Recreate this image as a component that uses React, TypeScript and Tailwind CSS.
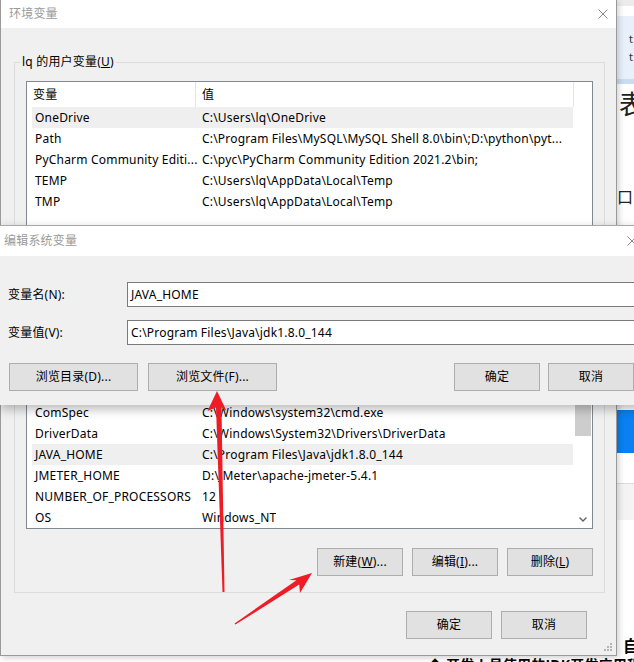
import React from "react";

type BtnProps = { children: React.ReactNode; className?: string };

const Btn = ({ children, className = "" }: BtnProps) => (
  <div
    className={`h-[28px] border border-[#adadad] bg-[#e1e1e1] flex items-center justify-center text-[12px] leading-[16px] text-black shrink-0 ${className}`}
  >
    {children}
  </div>
);

const Row = ({ name, value, sel = false }: { name: string; value: string; sel?: boolean }) => (
  <div className={`ml-[5px] w-[541px] h-[21px] flex items-center ${sel ? "bg-[#efefef]" : ""}`}>
    <div className="w-[163px] shrink-0 pl-[3px] whitespace-nowrap">{name}</div>
    <div className="pl-[7px] whitespace-nowrap overflow-hidden">{value}</div>
  </div>
);

const Header = () => (
  <div className="h-[25px] flex w-[547px]">
    <div className="w-[169px] pl-[6px] h-full flex items-center border-r border-[#e5e5e5]">变量</div>
    <div className="w-[378px] pl-[6px] h-full flex items-center border-r border-[#e5e5e5]">值</div>
  </div>
);

const CloseX = ({ className = "" }: { className?: string }) => (
  <svg width="10" height="10" viewBox="0 0 10 10" className={className}>
    <path d="M0.5 0.5 L9.5 9.5 M9.5 0.5 L0.5 9.5" stroke="#8a8a8a" strokeWidth="1" fill="none" />
  </svg>
);

export default function App() {
  return (
    <div className="relative w-[634px] h-[662px] overflow-hidden bg-white text-[12px] leading-[16px] tracking-[0.2px] text-black font-['Segoe_UI','Noto_Sans','Noto_Sans_CJK_SC',sans-serif]">
      {/* background window at right */}
      <div className="absolute left-[617px] top-0 w-[17px] h-[662px] bg-white flex flex-col">
        <div className="h-[6px] bg-[#ececec]" />
        <div className="h-[10px] bg-white" />
        <div className="h-[63px] bg-[#e8f1fb] pl-[12px] pt-[14px] text-[11px] leading-[18px] text-[#333]">
          <div>t</div>
          <div>t</div>
        </div>
        <div className="h-[5px] bg-[#c7ddf3]" />
        <div className="h-[40px] text-[26px] leading-[40px] text-[#222] pl-[2px]">表</div>
        <div className="h-[62px]" />
        <div className="h-[24px] text-[16px] leading-[22px] text-[#222]">口</div>
      </div>
      <div className="absolute left-[617px] top-[410px] w-[17px] h-[43px] bg-[#0a80f2]" />
      <div className="absolute left-[617px] top-[483px] w-[17px] h-[37px] border-t border-[#dcdcdc] bg-[#f4f4f4]" />
      <div className="absolute left-[623px] top-[636px] text-[16px] leading-[20px] font-bold text-black">自</div>
      <div className="absolute left-[428px] top-[655px] text-[14px] leading-[20px] font-bold text-black whitespace-nowrap">
        ◆ 开发人员使用的JDK开发应用程序
      </div>

      {/* outer window 环境变量 */}
      <div className="absolute left-0 top-0 w-[617px] h-[656px] flex flex-col border-l border-r border-b border-[#9a9a9a] bg-[#f0f0f0] shadow-[2px_2px_6px_rgba(0,0,0,0.18)]">
        <div className="h-[28px] shrink-0 bg-white flex items-center pl-[8px] text-[#9a9a9a]">
          <span>环境变量</span>
          <CloseX className="ml-auto mr-[8px]" />
        </div>
        <div className="flex flex-col pl-[13px]">
          {/* user vars group */}
          <div className="relative mt-[34px] w-[591px] border border-[#dcdcdc] pt-[18px] pl-[11px] pb-[16px]">
            <span className="absolute left-[5px] -top-[9px] px-[2px] bg-[#f0f0f0] leading-[16px]">
              lq 的用户变量(<span className="underline">U</span>)
            </span>
            <div className="w-[567px] h-[160px] border border-[#828790] bg-white flex flex-col">
              <Header />
              <Row name="OneDrive" value={"C:\\Users\\lq\\OneDrive"} sel />
              <Row name="Path" value={"C:\\Program Files\\MySQL\\MySQL Shell 8.0\\bin\\;D:\\python\\pyt..."} />
              <Row name="PyCharm Community Editi..." value={"C:\\pyc\\PyCharm Community Edition 2021.2\\bin;"} />
              <Row name="TEMP" value={"C:\\Users\\lq\\AppData\\Local\\Temp"} />
              <Row name="TMP" value={"C:\\Users\\lq\\AppData\\Local\\Temp"} />
            </div>
            <div className="mt-[19px] w-[567px] flex justify-end gap-[9px]">
              <Btn className="w-[86px]">新建(<span className="underline">N</span>)...</Btn>
              <Btn className="w-[86px]">编辑(<span className="underline">E</span>)...</Btn>
              <Btn className="w-[86px]">删除(<span className="underline">D</span>)</Btn>
            </div>
          </div>

          {/* system vars group */}
          <div className="relative mt-[52px] w-[591px] border border-[#dcdcdc] pt-[18px] pl-[11px] pb-[16px]">
            <span className="absolute left-[5px] -top-[9px] px-[2px] bg-[#f0f0f0] leading-[16px]">
              系统变量(<span className="underline">S</span>)
            </span>
            <div className="w-[567px] h-[153px] border border-[#828790] bg-white flex">
              <div className="w-[547px] flex flex-col">
                <Header />
                <Row name="ComSpec" value={"C:\\Windows\\system32\\cmd.exe"} />
                <Row name="DriverData" value={"C:\\Windows\\System32\\Drivers\\DriverData"} />
                <Row name="JAVA_HOME" value={"C:\\Program Files\\Java\\jdk1.8.0_144"} sel />
                <Row name="JMETER_HOME" value={"D:\\JMeter\\apache-jmeter-5.4.1"} />
                <Row name="NUMBER_OF_PROCESSORS" value="12" />
                <Row name="OS" value="Windows_NT" />
              </div>
              <div className="w-[18px] flex flex-col bg-white">
                <div className="h-[17px]" />
                <div className="ml-[1px] w-[16px] h-[42px] bg-[#cdcdcd]" />
                <div className="mt-auto h-[17px] flex items-center justify-center">
                  <svg width="8" height="5" viewBox="0 0 8 5">
                    <path d="M0.5 0.5 L4 4 L7.5 0.5" stroke="#606060" strokeWidth="1.3" fill="none" />
                  </svg>
                </div>
              </div>
            </div>
            <div className="mt-[19px] w-[567px] flex justify-end gap-[9px]">
              <Btn className="w-[86px]">新建(<span className="underline">W</span>)...</Btn>
              <Btn className="w-[86px]">编辑(<span className="underline">I</span>)...</Btn>
              <Btn className="w-[86px]">删除(<span className="underline">L</span>)</Btn>
            </div>
          </div>

          <div className="mt-[18px] w-[591px] pr-[18px] flex justify-end gap-[9px]">
            <Btn className="w-[86px]">确定</Btn>
            <Btn className="w-[86px]">取消</Btn>
          </div>
        </div>
        <svg width="10" height="10" viewBox="0 0 10 10" className="absolute right-[3px] bottom-[3px]">
          <rect x="7" y="1" width="2" height="2" fill="#b5b5b5" />
          <rect x="4" y="4" width="2" height="2" fill="#b5b5b5" />
          <rect x="7" y="4" width="2" height="2" fill="#b5b5b5" />
          <rect x="1" y="7" width="2" height="2" fill="#b5b5b5" />
          <rect x="4" y="7" width="2" height="2" fill="#b5b5b5" />
          <rect x="7" y="7" width="2" height="2" fill="#b5b5b5" />
        </svg>
      </div>

      {/* dialog 编辑系统变量 */}
      <div className="absolute left-0 top-[225px] w-[660px] h-[180px] border-t border-[#a8a8a8] bg-[#f0f0f0] shadow-[0_4px_10px_rgba(0,0,0,0.28)] flex flex-col">
        <div className="h-[30px] shrink-0 bg-white flex items-center pl-[4px] text-[#9a9a9a]">
          <span>编辑系统变量</span>
          <CloseX className="ml-auto mr-[23px]" />
        </div>
        <div className="flex flex-col pt-[26px]">
          <div className="flex items-center h-[25px]">
            <div className="w-[127px] pl-[8px]">变量名(N):</div>
            <div className="w-[523px] h-[25px] border border-[#7a7a7a] bg-white flex items-center pl-[3px]">JAVA_HOME</div>
          </div>
          <div className="flex items-center h-[25px] mt-[13px]">
            <div className="w-[127px] pl-[8px]">变量值(V):</div>
            <div className="w-[523px] h-[25px] border border-[#7a7a7a] bg-white flex items-center pl-[3px]">
              {"C:\\Program Files\\Java\\jdk1.8.0_144"}
            </div>
          </div>
          <div className="flex mt-[18px]">
            <Btn className="w-[129px] ml-[9px]">浏览目录(D)...</Btn>
            <Btn className="w-[129px] ml-[10px]">浏览文件(F)...</Btn>
            <Btn className="w-[86px] ml-[177px]">确定</Btn>
            <Btn className="w-[86px] ml-[8px]">取消</Btn>
          </div>
        </div>
      </div>

      {/* red annotation arrows */}
      <svg width="634" height="662" viewBox="0 0 634 662" className="absolute left-0 top-0 pointer-events-none">
        <polygon
          points="217,391 226.5,411 221.5,407.5 224.5,592 222.5,592 216,407.5 207.5,411"
          fill="#ee1c25"
        />
        <polygon
          points="312,573 289,580 296.4,580.3 234.6,623.4 235.4,624.6 299.2,584.5 300,593"
          fill="#ee1c25"
        />
      </svg>
    </div>
  );
}
